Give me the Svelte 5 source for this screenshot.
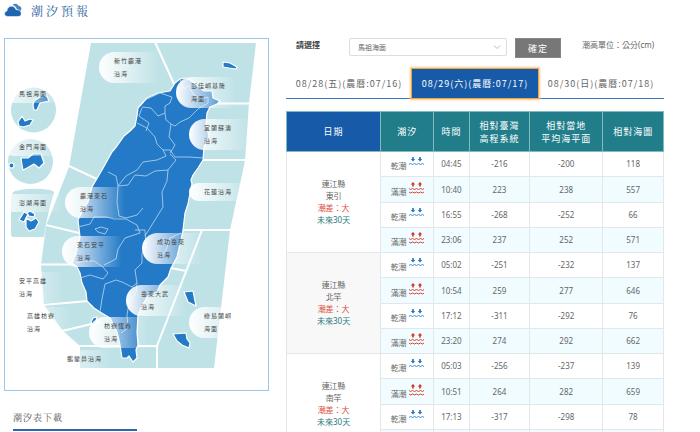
<script>
  const areas = [
    { x: 99, y: 52, name: ['新竹鹿港', '沿海'] },
    { x: 176, y: 77, name: ['彭佳嶼基隆', '海面'] },
    { x: 189, y: 119, name: ['宜蘭蘇澳', '沿海'] },
    { x: 189, y: 183, name: ['花蓮沿海'] },
    { x: 142, y: 233, name: ['成功臺東', '沿海'] },
    { x: 126, y: 285, name: ['臺東大武', '沿海'] },
    { x: 189, y: 307, name: ['綠島蘭嶼', '海面'] },
    { x: 65, y: 187, name: ['鹿港東石', '沿海'] },
    { x: 62, y: 236, name: ['東石安平', '沿海'] },
    { x: 89, y: 317, name: ['枋寮恆春', '沿海'] },
    { x: 4, y: 272, name: ['安平高雄', '沿海'], soft: true },
    { x: 12, y: 307, name: ['高雄枋寮', '沿海'], soft: true },
    { x: 52, y: 350, name: ['鵝鑾鼻沿海'], soft: true },
    { x: 4, y: 85, name: ['馬祖海面'], soft: true },
    { x: 4, y: 138, name: ['金門海面'], soft: true },
    { x: 4, y: 194, name: ['澎湖海面'], soft: true }
  ];
  const place = (a) => `left:${((a.x - 5) / 263) * 100}%;top:${((a.y - 39) / 351) * 100}%`;

  const tabs = ['08/28(五)(農曆:07/16)', '08/29(六)(農曆:07/17)', '08/30(日)(農曆:07/18)'];
  let active = $state(1);

  const groups = [
    { place: '東引', rows: [['04:45', '-216', '-200', '118'], ['10:40', '223', '238', '557'], ['16:55', '-268', '-252', '66'], ['23:06', '237', '252', '571']] },
    { place: '北竿', rows: [['05:02', '-251', '-232', '137'], ['10:54', '259', '277', '646'], ['17:12', '-311', '-292', '76'], ['23:20', '274', '292', '662']] },
    { place: '南竿', rows: [['05:03', '-256', '-237', '139'], ['10:51', '264', '282', '659'], ['17:13', '-317', '-298', '78'], ['', '', '', '']] }
  ];
</script>

<div class="page">
  <header>
    <svg class="cloud" viewBox="0 0 18 14" aria-hidden="true">
      <path fill="#4a82c0" d="M8.500 2C10.200 0 13.400.2 14.400 2.800 16.700 3.200 18 5 17 7.200L15.800 8.600C15 6.800 13.800 6.200 12.800 6.200 12.200 3.800 10.600 2.500 8.500 2Z" />
      <path fill="#2065b0" stroke="#fff" stroke-width=".5" d="M4 13.500C-.3 13.500-.4 8.600 3 8.100 3 2.600 10.300 1.200 12 6.700 15 6.400 17.200 8 17.200 10.500 17.200 12.600 16 13.500 14 13.500Z" />
    </svg>
    <h1>潮汐預報</h1>
  </header>

  <main>
    <section class="side">
      <div class="map">
        <svg viewBox="5 39 263 351" aria-hidden="true">
          <g fill="#bfe2e7">
            <path d="M91 43H256L249 103 245 161 230 230 226 265 214 368H80V346L63 331 44 305 41 265 46 226 69 167Z" />
            <circle cx="33.500" cy="110" r="22.500" />
            <circle cx="30.500" cy="161.500" r="22.500" />
            <path d="M15 191Q32 187 50 190Q56 191 53 196Q47 215 44 237H14Q10 237 11 232V200Q11 193 15 191Z" />
          </g>
          <path class="cuts" d="M155 42 174 84M216 103.500H251M200 160H247M180 230H232M202 230 187 269 157 346V369M136 346H157M171 268 186 271M69 166 99 180M46 225 79 233M40 264.500H78M43 305 88 301M62 331 100 322M79 346H121" />
          <path class="land" d="M175 83 180 79 185 78 190 80 198 86 204 91 212 91 213 98 220 101 217 104 210 107 207 113 206 123 209 136 204 147 203 160 198 168 193 175 191 180 192 184 190 193 188 204 185 213 183 230 181 240 177 257 171 268 168 277 160 285 157 292 147 297 142 306 138 315 137 332 138 345 136 350 137 358 133 362 129 356 127 358 122 358 120 345 117 332 110 318 100 312 94 308 87 301 86 292 82 283 80 273 77 267 72 263 76 253 80 237 78 220 83 210 88 202 92 187 102 170 112 152 117 146 124 136 130 131 135 126 137 116 138 108 147 98 158 93 170 91Z" />
          <path class="counties" d="M142 107 151 108 158 116 165 113 166 120 171 124 169 137 175 145 170 153M147 99 160 93 172 97 170 103 165 106 165 113M180 79 184 89 189 85 193 94 201 99 208 97 208 103 198 109 189 118 180 122 175 126 171 124M137 123 147 128 155 137 157 144 163 150 170 150 175 157 189 157 203 158M142 108 139 116 149 123 146 131M163 150 166 156 157 160 143 162 137 170 126 176 118 186 116 176 108 172M170 154 176 160 168 170 155 171 146 176 135 175 128 185 118 186M168 170 167 181 162 192 163 207 158 215 150 228 145 236M118 186 117 202 119 216 126 218 137 215 143 208M78 227 90 224 94 217 107 217 114 219 126 219 137 225 140 233 125 238 118 249 116 259 104 265M95 229 101 227 108 229 105 234 98 232ZM145 230 146 247 142 253 142 263 135 270 137 283 132 287 122 282 116 280 105 284 102 299 100 312M145 230H135M77 263 83 261 94 261 103 267 108 273 103 279 90 275 80 278M137 283 136 293 129 303 127 315 128 328 121 333M181 233 170 238 166 250 160 258" />
          <g class="land">
            <path d="M223 62 230 63 237 67 236 69 229 68 223 67Z" />
            <path d="M184 292 193 291 196 306 188 302Z" />
            <path d="M173 334 186 333 187 339 190 343 189 348 182 345 177 341Z" />
            <path d="M91 322 93 318 97 317 96 323 93 326Z" />
            <path d="M34 101 40 97 47 96 49 101 40 103 37 110 34 110 33 105Z" />
            <path d="M18 122 22 116 25 121 30 119 33 120 30 125 23 127 19 126Z" />
            <path d="M21 158 28 158 33 154 41 154 44 163 39 168 34 164 27 168 23 170 22 165Z" />
            <circle cx="11.500" cy="165.500" r="2.500" />
            <path d="M19 220 24 212 28 214 24 222Z" />
            <path d="M27 213 30 211 35 214 34 217 29 216Z" />
            <path d="M26 218 31 221 36 218 39 222 35 229 29 231 26 227Z" />
          </g>
        </svg>
        {#each areas as a}
          <a class="area" class:soft={a.soft} href="#tide" style={place(a)}>{#each a.name as line}<span>{line}</span>{/each}</a>
        {/each}
      </div>
      <h2>潮汐表下載</h2>
    </section>

    <section class="data" id="tide">
      <form class="filter" onsubmit={(e) => e.preventDefault()}>
        <label for="zone">請選擇</label>
        <div class="pick">
          <select id="zone"><option>馬祖海面</option></select>
          <svg viewBox="0 0 8 6" aria-hidden="true"><path d="M1 1.500 4 4.500 7 1.500" /></svg>
        </div>
        <button class="ok" type="submit">確定</button>
        <span class="unit">潮高單位：公分(cm)</span>
      </form>

      <div class="tabs" role="tablist">
        {#each tabs as tab, i}
          <button role="tab" aria-selected={active === i} class:active={active === i} onclick={() => (active = i)}>{tab}</button>
        {/each}
      </div>

      <table>
        <colgroup>
          <col class="c-date" /><col class="c-tide" /><col class="c-time" /><col class="c-tw" /><col class="c-local" /><col />
        </colgroup>
        <thead>
          <tr>
            <th class="date">日期</th>
            <th>潮汐</th>
            <th>時間</th>
            <th>相對臺灣<br />高程系統</th>
            <th>相對當地<br />平均海平面</th>
            <th>相對海圖</th>
          </tr>
        </thead>
        <tbody>
          {#each groups as g, gi}
            {#each g.rows as row, i}
              <tr class:high={i % 2 === 1}>
                {#if i === 0}
                  <td rowspan="4" class="where" class:alt={gi % 2 === 1}>
                    連江縣<br />{g.place}<br /><span class="range">潮差：大</span><br /><a href="#tide">未來30天</a>
                  </td>
                {/if}
                <td>
                  {#if row[0]}
                    <div class="tide">
                      <span>{i % 2 ? '滿潮' : '乾潮'}</span>
                      {#if i % 2}
                        <svg viewBox="0 0 15 12" aria-hidden="true">
                          <path fill="#d8321e" d="M4 0 6.200 2.500H4.800V4.500H3.200V2.500H1.800ZM11 0 13.200 2.500H11.800V4.500H10.200V2.500H8.800Z" />
                          <path class="wave red" d="M0 6.500 1.500 7.500 3.500 6.500 5.500 7.500 7.500 6.500 9.500 7.500 11.500 6.500 13.500 7.500 15 6.500M0 10 1.500 11 3.500 10 5.500 11 7.500 10 9.500 11 11.500 10 13.500 11 15 10" />
                        </svg>
                      {:else}
                        <svg viewBox="0 0 15 12" aria-hidden="true">
                          <path fill="#1f74c4" d="M4 5.500 1.800 3H3.200V1H4.800V3H6.200ZM11 5.500 8.800 3H10.200V1H11.800V3H13.200Z" />
                          <path class="wave" d="M0 8.500 1.500 7.500 3.500 8.500 5.500 7.500 7.500 8.500 9.500 7.500 11.500 8.500 13.500 7.500 15 8.500" />
                        </svg>
                      {/if}
                    </div>
                  {/if}
                </td>
                {#each row as cell}<td>{cell}</td>{/each}
              </tr>
            {/each}
          {/each}
        </tbody>
      </table>
    </section>
  </main>
</div>

<style>
  :global(body) { background: #fff; overflow-x: hidden; }
  .page {
    font-family: "Noto Sans", "Noto Sans CJK TC", sans-serif;
    font-size: 8px;
    color: #666;
    padding: 0 36px 0 4px;
  }
  header { display: flex; align-items: flex-start; gap: 9px; height: 38px; box-sizing: border-box; padding-top: 3px; }
  .cloud { width: 18px; height: 14px; }
  h1 { margin: 0; font: 400 12px/16px "AR PL UKai TW", "Noto Serif CJK TC", "Noto Sans CJK TC", serif; letter-spacing: 3px; color: #2d659f; }
  main { display: grid; grid-template-columns: 265fr 378fr; gap: 17px; align-items: start; }
  .map { position: relative; border: 1px solid #9cc5ea; overflow: hidden; }
  .map > svg { display: block; width: 100%; }
  .cuts { fill: none; stroke: #fff; stroke-width: 2; }
  .land { fill: #247ac6; stroke: #fff; stroke-width: 1.200; stroke-linejoin: round; }
  .counties { fill: none; stroke: #b9d8f1; stroke-width: .8; stroke-linejoin: round; }
  .area {
    position: absolute;
    display: flex;
    flex-direction: column;
    box-sizing: border-box;
    width: 60px;
    padding: 3px 0 2px 15px;
    border-radius: 16px 0 0 16px;
    background: linear-gradient(90deg, #fff, rgba(255, 255, 255, 0));
    color: #444;
    font-size: 6px;
    line-height: 13px;
    letter-spacing: 1px;
    text-decoration: none;
    white-space: nowrap;
  }
  .soft { background: linear-gradient(90deg, rgba(255, 255, 255, .8), rgba(255, 255, 255, 0)); }
  h2 {
    width: 124px;
    box-sizing: border-box;
    height: 23px;
    margin: 17px 0 0 9px;
    border-bottom: 2px solid #2868b3;
    font: 400 9px/20px "AR PL UKai TW", "Noto Serif CJK TC", "Noto Sans CJK TC", serif;
    letter-spacing: 1px;
    color: #555;
  }
  .filter { display: flex; align-items: flex-start; }
  label { width: 53px; padding-left: 10px; line-height: 13px; font-weight: 700; color: #444; }
  .pick { position: relative; flex: 1; }
  select {
    display: block;
    width: 100%;
    height: 18px;
    padding: 0 8px;
    border: 1px solid #ddd;
    border-radius: 2px;
    background: #fff;
    appearance: none;
    font: 7px "Noto Sans CJK TC", sans-serif;
    color: #666;
  }
  .pick svg { position: absolute; right: 6px; top: 6px; width: 8px; height: 6px; fill: none; stroke: #bbb; pointer-events: none; }
  .ok { width: 46px; height: 20px; margin-left: 8px; padding: 0; border: 1px solid #858585; background: #777; color: #fff; font: 9px "Noto Sans CJK TC", sans-serif; letter-spacing: 1px; }
  .unit { width: 82px; padding-left: 21px; line-height: 13px; white-space: nowrap; }
  .tabs { display: grid; grid-template-columns: repeat(3, 1fr); margin-top: 11px; border-bottom: 1px solid #3b78c0; }
  .tabs button { height: 29px; padding: 0; border: 0; background: none; color: #666; font: 9px/28px "Noto Sans CJK TC", sans-serif; letter-spacing: 1px; white-space: nowrap; }
  .tabs .active { background: #175aa8; color: #fff; outline: 1px solid #f3a33c; box-shadow: 0 0 2px 2px #f8c98a; }
  table { width: 100%; margin-top: 12px; border-collapse: collapse; table-layout: fixed; text-align: center; }
  .c-date { width: 25%; }
  .c-tide { width: 14%; }
  .c-time { width: 9.500%; }
  .c-tw { width: 16%; }
  .c-local { width: 19.400%; }
  th { height: 39px; padding: 0; border: 1px solid #83b9c0; background: #217d8a; color: #fff; font-size: 9px; font-weight: 400; line-height: 13px; letter-spacing: 1px; white-space: nowrap; }
  .date { background: #175aa8; }
  td { height: 24px; padding: 0; border: 1px solid #e2e7e9; line-height: 12px; }
  tr:nth-child(4n + 2) td { height: 25px; }
  .high { background: #f0fcff; }
  .where { background: #fff; }
  .alt { background: #f8f8f8; }
  .range { color: #dc4b38; }
  .where a { color: #2b7880; text-decoration: none; }
  .tide { display: flex; justify-content: center; gap: 2px; }
  .tide span { padding-top: 4px; }
  .tide svg { width: 15px; height: 12px; }
  .wave { fill: none; stroke: #3c8ccf; stroke-width: 1; }
  .red { stroke: #d8432f; }
</style>
